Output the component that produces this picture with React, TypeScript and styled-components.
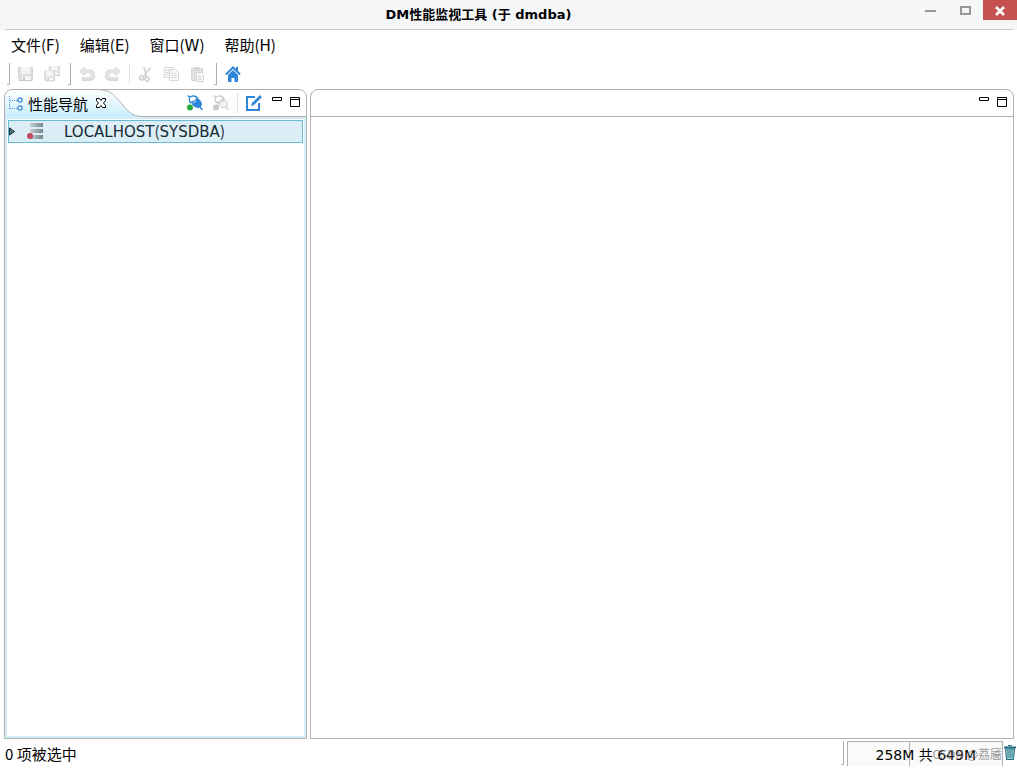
import React from "react";
import styled, { createGlobalStyle } from "styled-components";

const Global = createGlobalStyle`
  * { box-sizing: border-box; }
  body { margin: 0; background: #fff; color: #000; }
  body, button { font-family: "DejaVu Sans", "Noto Sans CJK SC", sans-serif; font-size: 14px; }
  button { border: 0; padding: 0; background: transparent; color: inherit; }
`;
const Window = styled.div`display: flex; flex-direction: column; height: 100vh; padding-bottom: 3px;`;
const TitleBar = styled.header`
  display: grid; grid-template-columns: 1fr auto 1fr; align-items: start;
  height: 30px; flex: none; background: #f5f6f8;
  position: relative;
  &::after { content: ""; position: absolute; left: 5px; right: 4px; bottom: 0; height: 1px; background: #c8c8c8; }
`;
const Title = styled.h1`
  margin: 0; padding-right: 60px; font: bold 13px/30px "DejaVu Sans", "Noto Sans CJK SC", sans-serif; white-space: pre;
`;
const WindowButtons = styled.div`display: flex; justify-content: flex-end;`;
const WindowButton = styled.button<{ $close?: boolean }>`
  width: ${p => (p.$close ? "34px" : "35px")}; height: 20px; padding-top: 1px;
  background: ${p => (p.$close ? "#c75050" : "transparent")};
  svg { display: block; margin: 0 auto; }
`;
const MenuBar = styled.nav`display: flex; gap: 20px; padding: 3px 11px 0; height: 32px; flex: none;`;
const MenuButton = styled.button`font: 15px/24px "Noto Sans CJK SC", sans-serif; height: 24px;`;
const Mnemonic = styled.span`font-family: "DejaVu Sans", sans-serif;`;
const ToolBar = styled.div`display: flex; align-items: center; height: 24px; padding-left: 7px; flex: none;`;
const Grip = styled.span`width: 3px; height: 22px; border: solid #b0b0b0; border-width: 0 1px 1px 0;`;
const Divider = styled.span`width: 1px; height: 20px; background: #e2e2e2;`;
const ToolGroup = styled.div`display: flex; gap: 10px; padding: 0 8px;`;
const IconButton = styled.button`width: 16px; height: 16px; flex: none; svg { display: block; }`;
const Workspace = styled.main`
  flex: 1; min-height: 0; display: grid; grid-template-columns: minmax(280px, 303fr) 704fr;
  gap: 3px; padding: 3px 3px 0 4px;
`;
const Panel = styled.section`
  display: flex; flex-direction: column; min-width: 0; border: 1px solid #b0b0b0; border-radius: 8px 8px 0 0;
`;
const PanelHead = styled.div`display: flex; justify-content: space-between; height: 27px; flex: none;`;
const Tab = styled.div`
  display: flex; align-items: center; gap: 4px; width: 137px; height: 27px; padding: 1px 0 0 3px;
  position: relative; flex: none;
`;
const TabShape = styled.svg`position: absolute; left: 0; top: 0; z-index: -1;`;
const TabTitle = styled.h2`margin: 0; font: 15px/24px "Noto Sans CJK SC", sans-serif; white-space: nowrap;`;
const CloseButton = styled.button`width: 12px; height: 12px; margin: 0 0 2px 3px; svg { display: block; }`;
const HeadTools = styled.div`
  display: flex; flex: 1; align-items: center; justify-content: flex-end; gap: 8px; padding-right: 5px;
  border-bottom: 1px solid #b0b0b0;
`;
const PairTools = styled.div`display: flex; gap: 10px;`;
const SizeTools = styled.div`display: flex; gap: 6px; padding: 0 0 5px 1px;`;
const SizeButton = styled.button`width: 12px; height: 12px; svg { display: block; }`;
const Tree = styled.ul`
  flex: 1; margin: 0; padding: 1px 1px 0; list-style: none; border: 2px solid #d2eefa;
`;
const TreeItem = styled.li`
  display: flex; align-items: center; height: 23px; padding-bottom: 2px; border: 1px solid #68bbd5;
  background: #dceef5; color: #172b35; font-size: 15px; white-space: nowrap;
`;
const Expand = styled.button`width: 8px; height: 10px; svg { display: block; }`;
const ServerIcon = styled.svg`margin: 0 21px 0 10px;`;
const Bracket = styled.span`font-family: "Noto Sans CJK SC", sans-serif;`;
const StatusBar = styled.footer`display: flex; justify-content: space-between; height: 27px; flex: none; padding-left: 5px;`;
const Status = styled.span`font: 15px/29px "Noto Sans CJK SC", sans-serif;`;
const StatusRight = styled.div`display: flex; gap: 3px; padding-top: 2px; position: relative;`;
const StatusGrip = styled.span`width: 3px; border: solid #b0b0b0; border-width: 0 1px 1px 0; height: 24px;`;
const Heap = styled.div`
  display: flex; justify-content: flex-end; align-items: center; width: 156px; padding-right: 26px;
  background: #fafafa; border: solid #b0b0b0; border-width: 1px 1px 0 1px; position: relative; white-space: nowrap;
  &::before { content: ""; position: absolute; left: 61px; top: 0; bottom: 0; width: 1px; background: #b0b0b0; }
`;
const HeapText = styled.span`position: relative; white-space: pre;`;
const Watermark = styled.span`
  position: absolute; right: 15px; top: 3px; color: rgba(120, 120, 120, .75);
  font: 12px/24px "Noto Sans CJK SC", sans-serif; white-space: nowrap;
`;
const TrashButton = styled.button`width: 12px; margin: 3px 1px 0 -2px; height: 18px; svg { display: block; }`;

const SizeControls = () => (
  <SizeTools>
    <SizeButton aria-label="Minimize panel"><svg width="12" height="12"><path d="M1.5 2.5h9v3h-9z" fill="#fff" stroke="#000" /></svg></SizeButton>
    <SizeButton aria-label="Maximize panel"><svg width="12" height="12"><path d="M1.5 2.5h9v9h-9zM1 4.5h10" fill="#fff" stroke="#000" /></svg></SizeButton>
  </SizeTools>
);
const Undo = ({ flip }: { flip?: boolean }) => (
  <svg width="16" height="16"><g transform={flip ? "translate(16 0) scale(-1 1)" : undefined}>
    <path d="M.5 5.500 6 .8v3h4.500a5.300 5.300 0 0 1 0 10.700H3v-3h7a2.400 2.400 0 0 0 0-4.800H6v3z" fill="#e4e5e5" stroke="#d3d4d4" strokeWidth=".7" />
    <path d="M3 14h8c2 0 3.700-1.400 4.300-3" fill="none" stroke="#cfd0d0" />
  </g></svg>
);
const Floppy = () => (
  <>
    <path d="M.5 1.500h14v13h-12l-2-2z" fill="#dfe0e0" stroke="#d3d4d4" />
    <path d="M3 1h9v7H3z" fill="#f4f4f4" />
    <path d="M4 10.500h8V15H4z" fill="#fafafa" />
    <path d="M5 11h2v3H5z" fill="#cbcccc" />
    <path d="M1 14.500h13" stroke="#c6c7c7" />
  </>
);
const Plug = ({ off }: { off?: boolean }) => {
  const c = off ? "#cccccc" : "#2380d4";
  return <svg width="16" height="16">
    <path d="M1 .5 3 2.500" stroke={c} strokeWidth="1.500" />
    <path d="M3.500 8C1.500 4.500 2 2.500 4 1.500c2.500-1 5.500 0 7 2.500z" fill="#fff" stroke={c} strokeWidth="1.200" />
    <path d="M5.500 9.500 12 4.500c2.500 2.500 3 5 1.500 7-2 2-5.500 1-8-2z" fill={off ? "#f3f3f3" : "#2b87da"} stroke={c} />
    <path d="m13 12 2.500 3M4.500 6.500l2 2.500M9 3.500 11 6" stroke={c} strokeWidth="1.300" />
    <circle cx="3" cy="12.500" r="3" fill={off ? "#cbc8c8" : "#27a83a"} />
  </svg>;
};
const menus = [["文件", "F"], ["编辑", "E"], ["窗口", "W"], ["帮助", "H"]];

export default function App() {
  return <><Global /><Window>
    <TitleBar>
      <span />
      <Title>DM性能监视工具 (于 dmdba)</Title>
      <WindowButtons>
        <WindowButton aria-label="Minimize"><svg width="12" height="12"><path d="M0 6h11" stroke="#999" strokeWidth="2" /></svg></WindowButton>
        <WindowButton aria-label="Maximize"><svg width="12" height="12"><path d="M1 2h9v7H1z" fill="none" stroke="#999" strokeWidth="2" /></svg></WindowButton>
        <WindowButton $close aria-label="Close"><svg width="10" height="10"><path d="m1 1 8 8M9 1 1 9" stroke="#fff" strokeWidth="2.500" /></svg></WindowButton>
      </WindowButtons>
    </TitleBar>
    <MenuBar>{menus.map(([label, key]) => <MenuButton key={key}>{label}(<Mnemonic>{key}</Mnemonic>)</MenuButton>)}</MenuBar>
    <ToolBar>
      <Grip />
      <ToolGroup>
        <IconButton aria-label="Save"><svg width="16" height="16"><Floppy /></svg></IconButton>
        <IconButton aria-label="Save all"><svg width="16" height="16"><g transform="translate(5 -1) scale(.72)"><Floppy /></g><g transform="translate(0 4) scale(.74)"><Floppy /></g></svg></IconButton>
      </ToolGroup>
      <Grip />
      <ToolGroup>
        <IconButton aria-label="Undo"><Undo /></IconButton>
        <IconButton aria-label="Redo"><Undo flip /></IconButton>
      </ToolGroup>
      <Divider />
      <ToolGroup>
        <IconButton aria-label="Cut"><svg width="16" height="16" fill="none" stroke="#d6d6d6" strokeWidth="1.800"><path d="m6 1 2.500 10M12.500 1.500 5 11" /><circle cx="3.500" cy="12" r="2" /><circle cx="9" cy="13" r="2" /></svg></IconButton>
        <IconButton aria-label="Copy"><svg width="16" height="16" fill="#f8f8f8" stroke="#d9d9d9"><path d="M.5 1.500h9v10h-9zM2 4.500h5M2 6.500h3M2 8.500h3" /><path d="M5.500 3.500h6l3 3v8h-9zM7 7.500h5M7 9.500h6M7 11.500h6" /></svg></IconButton>
        <IconButton aria-label="Paste"><svg width="16" height="16" fill="#e3e3e3" stroke="#d5d5d5"><path d="M1.500 2.500h11v12h-11zM4.500 1.500h5v3h-5z" /><path d="M6.500 6.500h5l2 2v7h-7zM8 9.500h3M8 11.500h4M8 13.500h4" fill="#fafafa" /></svg></IconButton>
      </ToolGroup>
      <Grip />
      <ToolGroup><IconButton aria-label="Home"><svg width="16" height="16"><path d="m1 8.500 7-7 7 7" fill="none" stroke="#2e87d8" strokeWidth="2" /><path d="m8 4 5 5v7H9.500v-4h-3v4H3V9z" fill="#2e87d8" /><path d="M11 1h2v4h-2z" fill="#2e87d8" /></svg></IconButton></ToolGroup>
    </ToolBar>
    <Workspace>
      <Panel>
        <PanelHead>
          <Tab>
            <TabShape width="137" height="27"><defs><linearGradient id="tab" x2="0" y2="1"><stop stopColor="#fff" /><stop offset="1" stopColor="#c8eefc" /></linearGradient></defs><path d="M0 27V7Q1 0 8 0h88c10 0 14 6 21 14 7 9 12 12 20 12v1z" fill="url(#tab)" /><path d="M96 0c10 0 14 6 21 14 7 9 12 12.500 20 12.500" fill="none" stroke="#b0b0b0" /></TabShape>
            <svg width="16" height="16"><path d="M1.500 0v13M2 4.500h7M2 12.500h7" stroke="#4c92d8" strokeDasharray="1 1" /><g fill="#fff" stroke="#4a96df" strokeWidth="1.500"><circle cx="12" cy="4" r="2" /><circle cx="12" cy="12" r="2" /></g></svg>
            <TabTitle>性能导航</TabTitle>
            <CloseButton aria-label="Close tab"><svg width="12" height="12"><path d="M1.500 1.500h3L6 3.500l1.500-2h3v2L8.500 6l2 2.500v2h-3L6 8.500l-1.500 2h-3v-2L3.500 6l-2-2.500z" fill="#fff" stroke="#000" /></svg></CloseButton>
          </Tab>
          <HeadTools>
            <PairTools><IconButton aria-label="Connect"><Plug /></IconButton><IconButton aria-label="Disconnect"><Plug off /></IconButton></PairTools>
            <Divider />
            <IconButton aria-label="Edit"><svg width="16" height="16"><path d="M9 2H1v13h12V8" fill="none" stroke="#2d86d8" strokeWidth="2" /><path d="m5 11 1-3 8-8 2 2-8 8z" fill="#2d86d8" /></svg></IconButton>
            <SizeControls />
          </HeadTools>
        </PanelHead>
        <Tree><TreeItem>
          <Expand aria-label="Expand"><svg width="8" height="10"><path d="m.5 2 5 3.500-5 3.500z" fill="#4d7a88" stroke="#172b35" /></svg></Expand>
          <ServerIcon width="16" height="16"><defs><linearGradient id="server"><stop stopColor="#c6ced1" /><stop offset="1" stopColor="#77868d" /></linearGradient></defs><path d="M3 0h13v4H3zM3 6h13v4H3zM3 12h13v4H3z" fill="url(#server)" /><circle cx="3" cy="13" r="3" fill="#c04a62" /></ServerIcon>
          <span>LOCALHOST<Bracket>(</Bracket>SYSDBA<Bracket>)</Bracket></span>
        </TreeItem></Tree>
      </Panel>
      <Panel><PanelHead><HeadTools><SizeControls /></HeadTools></PanelHead></Panel>
    </Workspace>
    <StatusBar>
      <Status>0 项被选中</Status>
      <StatusRight><StatusGrip /><Heap><HeapText>258M 共 649M</HeapText></Heap><Watermark>CSDN @荔靥</Watermark>
        <TrashButton aria-label="Run garbage collector"><svg width="12" height="18"><path d="M1.500 5h9l-1 10.500h-7z" fill="#a5d3d6" stroke="#21677c" /><path d="M0 3.500h12" stroke="#21677c" strokeWidth="2" /><path d="M4 1.500h4" stroke="#21677c" /><path d="M4 6v8M6 6v8M8 6v8" stroke="#2d7b8e" /></svg></TrashButton>
      </StatusRight>
    </StatusBar>
  </Window></>;
}
